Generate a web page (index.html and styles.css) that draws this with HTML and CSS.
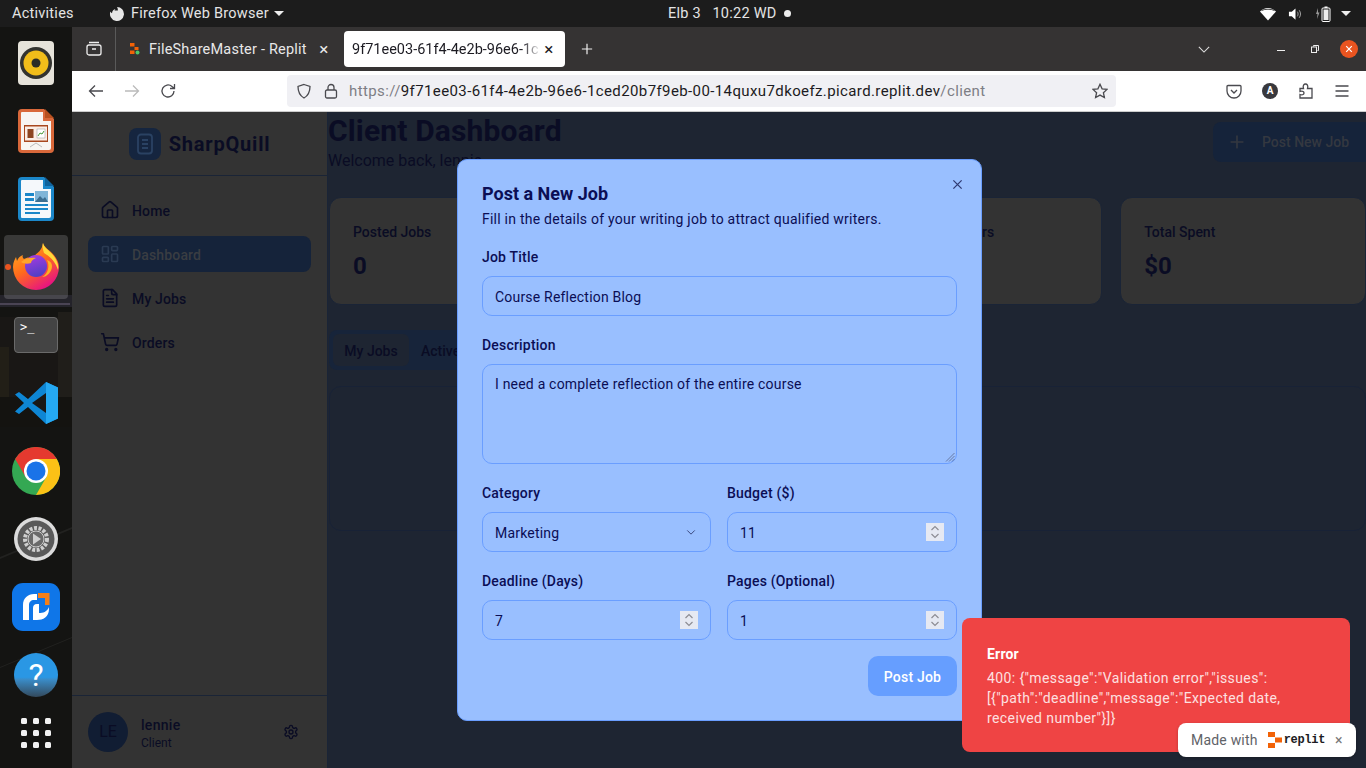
FILE: index.html
```html
<!DOCTYPE html>
<html lang="en">
<head>
    <meta charset="UTF-8">
    <meta name="viewport" content="width=device-width, initial-scale=1.0">
    <title>Client Dashboard</title>
    <link rel="stylesheet" href="styles.css">
</head>
<body>
    <!-- system top bar -->
    <header class="topbar">
        <span class="activities">Activities</span>
        <svg class="top-ff" viewBox="0 0 16 16"><path d="M8 1a7 7 0 1 1-6.6 4.6c.3.9.9 1.5 1.6 1.7C3 5 4.500 3.500 6.500 3 5.800 3.700 5.600 4.300 5.700 4.800c1-.5 3-.6 4 .7.900 1.300.2 3.500-1.700 3.700-1.500.1-2.500-.8-2.700-1.900C6 8 7 8.200 8 7.800 7 7.500 6.500 6.800 6.300 6.200 9 6 9.500 3.500 8 1z" fill="#e6e6e6"/></svg>
        <span class="app-name">Firefox Web Browser</span>
        <span class="caret"></span>
        <span class="clock">Elb 3 &nbsp; 10:22 WD</span>
        <span class="clock-dot"></span>
        <div class="tray">
            <svg class="tray-wifi" viewBox="0 0 16 14"><path d="M0 4.500C2 2.500 5 1 8 1s6 1.500 8 3.500L8 13.500z" fill="#fff"/><path d="M1.500 3.600 C4 1.800 12 1.800 14.500 3.600" stroke="#1c1c1c" stroke-width=".8" fill="none"/></svg>
            <svg class="tray-vol" viewBox="0 0 16 14"><path d="M1 4.500h3L8 1v12L4 9.500H1z" fill="#fff"/><path d="M10 4.500c1 1.500 1 3.500 0 5M12 3c1.800 2.500 1.800 5.500 0 8" stroke="#aaa" fill="none"/></svg>
            <svg class="tray-bat" viewBox="0 0 16 16"><path d="M3 2 1 8h1.500L2 13l2.500-6.500H3z" fill="#999"/><rect x="7" y="2" width="8" height="13.500" rx="1" fill="none" stroke="#fff"/><rect x="9.500" y=".5" width="3" height="1.500" fill="#fff"/><rect x="8.500" y="3.500" width="5" height="10.500" fill="#eee"/></svg>
            <span class="caret"></span>
        </div>
    </header>

    <div class="desktop">
        <nav class="dock">
            <svg class="dock-wall" viewBox="0 0 72 741" preserveAspectRatio="none">
                <rect x="0" y="268" width="72" height="12" fill="#24232a"/>
                <rect x="0" y="276" width="70" height="2" fill="#4a4454"/>
                <rect x="0" y="290" width="72" height="80" fill="#191715"/>
                <rect x="0" y="320" width="9" height="70" fill="#221f17"/>
                <rect x="58" y="285" width="14" height="90" fill="#201e1a"/>
                <rect x="0" y="370" width="72" height="30" fill="#141310"/>
                <path d="M0 530 72 500v2L0 532zM0 640 72 610v1L0 641z" fill="#222220"/>
            </svg>
            <div class="dock-item">
                <svg class="dock-icon" viewBox="0 0 36 44"><rect width="36" height="44" rx="4" fill="#e6e3da"/><circle cx="18" cy="22" r="16" fill="#33332f"/><circle cx="18" cy="22" r="12.500" fill="#f1bd1a"/><circle cx="18" cy="22" r="4.500" fill="#2b2b26"/></svg>
            </div>
            <div class="dock-item">
                <svg class="dock-icon" viewBox="0 0 36 44"><path d="M4 0h22l10 10v30a4 4 0 0 1-4 4H4a4 4 0 0 1-4-4V4a4 4 0 0 1 4-4z" fill="#d9683a"/><path d="M4 3h21v9h8v27a2 2 0 0 1-2 2H4a1 1 0 0 1-1-1V4a1 1 0 0 1 1-1z" fill="#f8f5f2"/><path d="M27 0l9 9h-9z" fill="#b8501f"/><rect x="6" y="16" width="24" height="17" fill="#a8481f"/><rect x="7" y="17.500" width="22" height="14" fill="#fbeee6"/><rect x="9.500" y="20" width="6" height="9" fill="#8c4420"/><rect x="19" y="20" width="8" height="9" fill="#fff" stroke="#999" stroke-width=".5"/><path d="M20 27l2-3 2 1 2-3" stroke="#4a9b3a" fill="none"/><path d="M12 38l6-4 6 4" stroke="#bbb" fill="none"/></svg>
            </div>
            <div class="dock-item">
                <svg class="dock-icon" viewBox="0 0 36 44"><path d="M4 0h22l10 10v30a4 4 0 0 1-4 4H4a4 4 0 0 1-4-4V4a4 4 0 0 1 4-4z" fill="#1b87c9"/><path d="M4 3h21v9h8v27a2 2 0 0 1-2 2H4a1 1 0 0 1-1-1V4a1 1 0 0 1 1-1z" fill="#f5f8fb"/><path d="M27 0l9 9h-9z" fill="#10639b"/><rect x="7" y="16" width="9" height="3" fill="#1b87c9"/><rect x="7" y="21" width="9" height="3" fill="#1b87c9"/><rect x="17" y="14" width="13" height="11" fill="#7fb5d8"/><path d="M17 25l5-6 3 3 2-2 3 5z" fill="#3c6e90"/><rect x="7" y="27" width="23" height="2" fill="#1b87c9"/><rect x="7" y="31" width="23" height="2" fill="#1b87c9"/><rect x="7" y="35" width="15" height="2" fill="#1b87c9"/></svg>
            </div>
            <div class="dock-item dock-item-active">
                <span class="run-dot"></span>
                <svg class="dock-ff" viewBox="0 0 46 48">
                    <defs>
                        <linearGradient id="ffo" x1="0" y1="0" x2=".6" y2="1"><stop offset="0" stop-color="#ffb81f"/><stop offset=".55" stop-color="#ff6a1c"/><stop offset="1" stop-color="#e8157f"/></linearGradient>
                        <linearGradient id="ffp" x1=".3" y1="0" x2=".6" y2="1"><stop offset="0" stop-color="#a53be0"/><stop offset="1" stop-color="#4d3fc4"/></linearGradient>
                    </defs>
                    <path d="M30 1c1 4 5 6 9 10 5 5 7 10 7 14a23 23 0 0 1-46 0c0-5 2-8 3-10l1 4c1-3 3-5 6-6-1 2 0 3 1 4 2-1 5-2 8-1 3-4 10-6 11-15z" fill="url(#ffo)"/>
                    <path d="M30 1c1 5 6 7 10 12 4 5 6 10 5 15-2-7-7-13-14-17-1-3-2-7-1-10z" fill="#ffd93a"/>
                    <circle cx="23" cy="24" r="11" fill="url(#ffp)"/>
                    <path d="M8 20c4-4 10-5 15-4-3 1-5 3-5 5-3 1-7 1-10-1z" fill="#ffa52a"/>
                    <path d="M34 18c3 6 1 14-5 17 5 0 10-5 10-11 0-3-2-5-5-6z" fill="#ffb01f"/>
                </svg>
            </div>
            <div class="dock-item">
                <div class="term-icon"><span>&gt;_</span></div>
            </div>
            <div class="dock-item">
                <svg class="dock-code" viewBox="0 0 44 42"><path d="M32 0 44 5.500v31L32 42 14 25l-9 7-4-2.500L10 21 1 12.500 5 10l9 7z" fill="#0e86d4"/><path d="M32 0l12 5.500v31L32 42z" fill="#25a9f3"/><path d="M32 11 18 21l14 10z" fill="#191817"/></svg>
            </div>
            <div class="dock-item">
                <svg class="dock-round" viewBox="0 0 48 48"><circle cx="24" cy="24" r="24" fill="#34a853"/><path d="M44.800 12A24 24 0 0 1 24 48L34.400 30 24 12z" fill="#fbc116"/><path d="M3.200 12a24 24 0 0 1 41.600 0H24L13.600 30z" fill="#e5392f"/><circle cx="24" cy="24" r="12" fill="#fff"/><circle cx="24" cy="24" r="9.500" fill="#1a73e8"/></svg>
            </div>
            <div class="dock-item">
                <svg class="dock-set" viewBox="0 0 44 44"><circle cx="22" cy="22" r="22" fill="#dcdcdc"/><circle cx="22" cy="22" r="18.500" fill="#5a5a5a"/><circle cx="22" cy="22" r="11" fill="none" stroke="#cfcfcf" stroke-width="4" stroke-dasharray="3 1.500"/><circle cx="22" cy="22" r="8" fill="#6a6a6a" stroke="#cfcfcf"/><path d="M19 16.500v11l8-5.500z" fill="#cfcfcf"/></svg>
            </div>
            <div class="dock-item">
                <svg class="dock-round" viewBox="0 0 48 48"><rect width="48" height="48" rx="11" fill="#0f76e8"/><path d="M11 37V22c0-7 5-11 11-11h3v6h-3c-3 0-5 2-5 5v15z" fill="#fff"/><path d="M21 37V25c0-2 1-4 4-4h2v9c4 0 8-1 10-6v2c0 8-6 11-12 11z" fill="#fff"/><path d="M26 10h11.500v12H33v-7h-7z" fill="#f57f17"/></svg>
            </div>
            <div class="dock-item">
                <div class="help-icon">?</div>
            </div>
            <div class="dock-apps">
                <span></span><span></span><span></span>
                <span></span><span></span><span></span>
                <span></span><span></span><span></span>
            </div>
        </nav>

        <div class="browser">
            <div class="tabstrip">
                <div class="view-btn">
                    <svg class="ic16 light" viewBox="0 0 16 16"><rect x="1" y="4" width="14" height="10" rx="2"/><path d="M3 1.500h10M6 8h4"/></svg>
                </div>
                <div class="tab">
                    <svg class="favicon" viewBox="0 0 10 12"><rect x="0" y="0" width="4.500" height="3.500" fill="#f26207"/><rect x="4.500" y="4" width="4" height="3" fill="#f26207"/><rect x="0" y="7.500" width="4.500" height="3.500" fill="#f26207"/><circle cx="7.500" cy="9.500" r="2" fill="#4cc76b"/></svg>
                    <span class="tab-title">FileShareMaster - Replit</span>
                    <span class="tab-close">×</span>
                </div>
                <div class="tab tab-active">
                    <span class="tab-title">9f71ee03-61f4-4e2b-96e6-1c</span>
                    <span class="tab-close">×</span>
                </div>
                <svg class="new-tab" viewBox="0 0 14 14"><path d="M7 1v12M1 7h12"/></svg>
                <svg class="tab-list" viewBox="0 0 14 8"><path d="M1 1l6 6 6-6"/></svg>
                <div class="win-btns">
                    <span class="win-min"></span>
                    <svg class="win-max" viewBox="0 0 8 8"><path d="M2.500 1.500V.5h5v5h-1"/><rect x=".5" y="2" width="5" height="5.500"/></svg>
                    <span class="win-close">
                        <svg viewBox="0 0 10 10"><path d="M1.500 1.500l7 7M8.500 1.500l-7 7"/></svg>
                    </span>
                </div>
            </div>

            <div class="toolbar">
                <svg class="ic16 tool-back" viewBox="0 0 16 16"><path d="M15 8H1.500M7 2.500 1.500 8 7 13.500"/></svg>
                <svg class="ic16 tool-fwd" viewBox="0 0 16 16"><path d="M1 8h13.500M9 2.500 14.500 8 9 13.500"/></svg>
                <svg class="ic16 tool-reload" viewBox="0 0 16 16"><path d="M14 8a6 6 0 1 1-2-4.500L14 5M14.500 1v4.500H10"/></svg>
                <div class="urlbar">
                    <svg class="ic16" viewBox="0 0 16 16"><path d="M8 1.500 14 3.500c0 5-1.500 9-6 11.500C3.500 12.500 2 8.500 2 3.500z"/></svg>
                    <svg class="ic16 url-lock" viewBox="0 0 16 16"><rect x="2.500" y="7" width="11" height="8" rx="1.500"/><path d="M5 7V4.500a3 3 0 0 1 6 0V7"/></svg>
                    <span class="url-text"><span class="url-dim">https://</span>9f71ee03-61f4-4e2b-96e6-1ced20b7f9eb-00-14quxu7dkoefz.picard.replit.dev<span class="url-dim">/client</span></span>
                    <svg class="ic16 url-star" viewBox="0 0 16 16"><path d="M8 1.300l2.100 4.500 4.900.6-3.600 3.300 1 4.800L8 12.100l-4.400 2.400 1-4.800L1 6.400l4.900-.6z"/></svg>
                </div>
                <div class="tool-right">
                    <svg class="ic16" viewBox="0 0 16 16"><path d="M2 2.500h12a1 1 0 0 1 1 1V8a7 7 0 0 1-14 0V3.500a1 1 0 0 1 1-1zM5 7l3 3 3-3"/></svg>
                    <span class="acct">A</span>
                    <svg class="ic16" viewBox="0 0 16 16"><path d="M2 5.500h3.500c-1-3 .5-4.500 2-4.500s3 1.500 2 4.500H14V15H2v-3.500c3 1 4-.5 4-1.500S5 7.500 2 8.500z"/></svg>
                    <svg class="ic16" viewBox="0 0 16 16"><path d="M1.500 3h13M1.500 8h13M1.500 13h13"/></svg>
                </div>
            </div>

            <div class="app">
                <aside class="sidebar">
                    <div class="brand">
                        <div class="brand-mark">
                            <svg viewBox="0 0 24 24"><rect x="5" y="2.500" width="14" height="19" rx="3"/><path d="M9 8h6M9 12h6M9 16h6"/></svg>
                        </div>
                        <span class="brand-name">SharpQuill</span>
                    </div>
                    <ul class="side-nav">
                        <li class="side-link">
                            <svg class="lu" viewBox="0 0 24 24"><path d="M15 21v-8a1 1 0 0 0-1-1h-4a1 1 0 0 0-1 1v8"/><path d="M3 10a2 2 0 0 1 .709-1.528l7-5.999a2 2 0 0 1 2.582 0l7 5.999A2 2 0 0 1 21 10v9a2 2 0 0 1-2 2H5a2 2 0 0 1-2-2z"/></svg>
                            Home
                        </li>
                        <li class="side-link side-link-on">
                            <svg class="lu" viewBox="0 0 24 24"><rect x="3" y="3" width="7" height="9" rx="1"/><rect x="14" y="3" width="7" height="5" rx="1"/><rect x="14" y="12" width="7" height="9" rx="1"/><rect x="3" y="16" width="7" height="5" rx="1"/></svg>
                            Dashboard
                        </li>
                        <li class="side-link">
                            <svg class="lu" viewBox="0 0 24 24"><path d="M15 2H6a2 2 0 0 0-2 2v16a2 2 0 0 0 2 2h12a2 2 0 0 0 2-2V7Z"/><path d="M14 2v4a2 2 0 0 0 2 2h4"/><path d="M10 9H8"/><path d="M16 13H8"/><path d="M16 17H8"/></svg>
                            My Jobs
                        </li>
                        <li class="side-link">
                            <svg class="lu" viewBox="0 0 24 24"><circle cx="8" cy="21" r="1"/><circle cx="19" cy="21" r="1"/><path d="M2.050 2.050h2l2.660 12.420a2 2 0 0 0 2 1.580h9.780a2 2 0 0 0 1.950-1.570l1.650-7.430H5.120"/></svg>
                            Orders
                        </li>
                    </ul>
                    <div class="side-user">
                        <div class="avatar">LE</div>
                        <div class="user-info">
                            <div class="user-name">lennie</div>
                            <div class="user-role">Client</div>
                        </div>
                        <svg class="lu user-gear" viewBox="0 0 24 24"><path d="M12.220 2h-.44a2 2 0 0 0-2 2v.18a2 2 0 0 1-1 1.730l-.43.25a2 2 0 0 1-2 0l-.15-.08a2 2 0 0 0-2.730.73l-.22.38a2 2 0 0 0 .73 2.730l.15.1a2 2 0 0 1 1 1.720v.51a2 2 0 0 1-1 1.740l-.15.09a2 2 0 0 0-.73 2.730l.22.38a2 2 0 0 0 2.730.73l.15-.08a2 2 0 0 1 2 0l.43.25a2 2 0 0 1 1 1.730V20a2 2 0 0 0 2 2h.44a2 2 0 0 0 2-2v-.18a2 2 0 0 1 1-1.730l.43-.25a2 2 0 0 1 2 0l.15.08a2 2 0 0 0 2.730-.73l.22-.39a2 2 0 0 0-.73-2.730l-.15-.08a2 2 0 0 1-1-1.740v-.5a2 2 0 0 1 1-1.740l.15-.09a2 2 0 0 0 .73-2.730l-.22-.38a2 2 0 0 0-2.730-.73l-.15.08a2 2 0 0 1-2 0l-.43-.25a2 2 0 0 1-1-1.730V4a2 2 0 0 0-2-2z"/><circle cx="12" cy="12" r="3"/></svg>
                    </div>
                </aside>

                <main class="main">
                    <div class="page-head">
                        <div class="page-title">
                            <h1>Client Dashboard</h1>
                            <p class="welcome">Welcome back, lennie</p>
                        </div>
                        <div class="post-btn">
                            <svg class="lu" viewBox="0 0 24 24"><path d="M5 12h14M12 5v14"/></svg>
                            Post New Job
                        </div>
                    </div>
                    <div class="stats">
                        <div class="stat"><div class="stat-label">Posted Jobs</div><div class="stat-value">0</div></div>
                        <div class="stat"></div>
                        <div class="stat"><div class="stat-label">Completed Orders</div></div>
                        <div class="stat"><div class="stat-label">Total Spent</div><div class="stat-value">$0</div></div>
                    </div>
                    <div class="tabs">
                        <span class="tabs-item tabs-item-on">My Jobs</span>
                        <span class="tabs-item">Active</span>
                    </div>
                    <div class="panel"></div>
                </main>
            </div>
        </div>
    </div>

    <!-- dialog and toasts sit over the page -->
    <section class="modal">
        <svg class="modal-x" viewBox="0 0 12 12"><path d="M1.500 1.500l9 9M10.500 1.500l-9 9"/></svg>
        <h2>Post a New Job</h2>
        <p class="modal-sub">Fill in the details of your writing job to attract qualified writers.</p>
        <form class="job-form">
            <div class="field">
                <label>Job Title</label>
                <div class="box">Course Reflection Blog</div>
            </div>
            <div class="field">
                <label>Description</label>
                <div class="box box-area">I need a complete reflection of the entire course
                    <svg class="grip" viewBox="0 0 10 10"><path d="M9.500 1 1 9.500M9.500 4 4 9.500M9.500 7 7 9.500"/></svg>
                </div>
            </div>
            <div class="form-row">
                <div class="field">
                    <label>Category</label>
                    <div class="box box-split">Marketing
                        <svg class="sel-arrow" viewBox="0 0 12 8"><path d="M1.500 1.500 6 6l4.500-4.500"/></svg>
                    </div>
                </div>
                <div class="field">
                    <label>Budget ($)</label>
                    <div class="box box-split">11
                        <span class="spin"><svg viewBox="0 0 18 18"><path d="M5.500 7 9 3.500 12.500 7M5.500 11 9 14.500 12.500 11"/></svg></span>
                    </div>
                </div>
            </div>
            <div class="form-row">
                <div class="field">
                    <label>Deadline (Days)</label>
                    <div class="box box-split">7
                        <span class="spin"><svg viewBox="0 0 18 18"><path d="M5.500 7 9 3.500 12.500 7M5.500 11 9 14.500 12.500 11"/></svg></span>
                    </div>
                </div>
                <div class="field">
                    <label>Pages (Optional)</label>
                    <div class="box box-split">1
                        <span class="spin"><svg viewBox="0 0 18 18"><path d="M5.500 7 9 3.500 12.500 7M5.500 11 9 14.500 12.500 11"/></svg></span>
                    </div>
                </div>
            </div>
            <div class="form-foot">
                <div class="submit">Post Job</div>
            </div>
        </form>
    </section>

    <div class="toast">
        <div class="toast-title">Error</div>
        <div class="toast-body">400: {"message":"Validation error","issues":<br>[{"path":"deadline","message":"Expected date,<br>received number"}]}</div>
    </div>

    <div class="made-with">
        <span>Made with</span>
        <svg class="replit-mark" viewBox="0 0 14 16"><rect x="0" y="0" width="7" height="5" fill="#f26207"/><rect x="7" y="5.500" width="7" height="5" fill="#f26207"/><rect x="0" y="11" width="7" height="5" fill="#f26207"/></svg>
        <b>replit</b>
        <i>×</i>
    </div>
</body>
</html>
```

FILE: styles.css
```css
* {
    box-sizing: border-box;
}
html, body {
    height: 100%;
}
body {
    margin: 0;
    width: 1366px;
    height: 768px;
    overflow: hidden;
    font-family: Roboto, "Noto Sans", sans-serif;
    font-size: 14px;
    background: #1e2532;
    display: flex;
    flex-direction: column;
}

/* top bar */
.topbar {
    height: 27px;
    flex: none;
    background: #1c1c1c;
    color: #e4e4e4;
    display: flex;
    align-items: center;
    font-size: 14.5px;
    letter-spacing: 0.25px;
    padding-left: 12px;
}
.activities {
    width: 97px;
}
.top-ff {
    width: 16px;
    height: 16px;
    margin-right: 6px;
}
.app-name {
    width: 143px;
}
.caret {
    width: 0;
    height: 0;
    border-left: 5px solid transparent;
    border-right: 5px solid transparent;
    border-top: 5px solid #eee;
}
.clock {
    margin-left: 384px;
    width: 116px;
}
.clock-dot {
    width: 7px;
    height: 7px;
    border-radius: 50%;
    background: #eee;
}
.tray {
    margin-left: auto;
    display: flex;
    align-items: center;
    padding-right: 15px;
}
.tray-wifi {
    width: 16px;
    height: 14px;
    margin-right: 12px;
}
.tray-vol {
    width: 15px;
    height: 14px;
    margin-right: 12px;
}
.tray-bat {
    width: 16px;
    height: 16px;
    margin-right: 10px;
}

.desktop {
    flex: 1;
    display: flex;
    min-height: 0;
}

/* dock */
.dock {
    width: 72px;
    flex: none;
    background: #141412;
    position: relative;
    padding-top: 2px;
    display: flex;
    flex-direction: column;
    align-items: center;
}
.dock-wall {
    position: absolute;
    left: 0;
    top: 0;
    width: 100%;
    height: 100%;
}
.dock-item {
    height: 68px;
    width: 64px;
    flex: none;
    display: flex;
    align-items: center;
    justify-content: center;
    position: relative;
}
.dock-item-active {
    background: rgba(255, 255, 255, 0.16);
    border-radius: 4px;
    height: 64px;
    margin: 2px 0;
    padding-bottom: 3px;
}
.dock-icon {
    width: 36px;
    height: 44px;
}
.dock-ff {
    width: 46px;
    height: 48px;
}
.run-dot {
    position: absolute;
    left: 1px;
    top: 29px;
    width: 6px;
    height: 6px;
    border-radius: 50%;
    background: #e95420;
}
.term-icon {
    width: 44px;
    height: 36px;
    background: #444;
    border: 1px solid #6a6a6a;
    border-radius: 4px;
    color: #fff;
    font-family: "DejaVu Sans Mono", monospace;
    font-size: 12px;
    line-height: 14px;
    padding: 2px 5px;
}
.dock-code {
    width: 44px;
    height: 42px;
}
.dock-round {
    width: 48px;
    height: 48px;
}
.dock-set {
    width: 44px;
    height: 44px;
}
.help-icon {
    width: 44px;
    height: 44px;
    border-radius: 50%;
    background: linear-gradient(#2a97e4 55%, #3a8cc8 60%, #33495c);
    color: #fff;
    font-size: 32px;
    line-height: 44px;
    text-align: center;
}
.dock-apps {
    position: relative;
    margin-top: 9px;
    width: 30px;
    display: grid;
    grid-template-columns: repeat(3, 6px);
    grid-auto-rows: 6px;
    gap: 6px;
}
.dock-apps span {
    background: #f2f2f2;
    border-radius: 1.5px;
}

/* browser chrome */
.browser {
    flex: 1;
    min-width: 0;
    display: flex;
    flex-direction: column;
}
.ic16 {
    width: 16px;
    height: 16px;
    fill: none;
    stroke: #4a4a4f;
    stroke-width: 1.3;
    flex: none;
}
.ic16.light {
    stroke: #eee;
}
.tabstrip {
    height: 44px;
    flex: none;
    background: #353333;
    display: flex;
    align-items: center;
}
.view-btn {
    width: 44px;
    height: 44px;
    border-right: 1px solid #5a5a5a;
    display: flex;
    align-items: center;
    justify-content: center;
    flex: none;
}
.tab {
    height: 36px;
    display: flex;
    align-items: center;
    color: #e8e8e8;
    font-size: 14.5px;
    letter-spacing: 0.2px;
    flex: none;
}
.tab:nth-child(2) {
    width: 228px;
    padding: 0 12px 0 14px;
}
.favicon {
    width: 10px;
    height: 12px;
    margin-right: 9px;
    flex: none;
}
.tab-title {
    flex: 1;
    white-space: nowrap;
}
.tab-close {
    font-size: 17px;
    line-height: 17px;
    width: 16px;
    text-align: center;
    flex: none;
}
.tab-active {
    width: 221px;
    background: #fff;
    border-radius: 4px;
    color: #1c1b22;
    padding: 0 8px;
}
.tab-active .tab-title {
    letter-spacing: 0;
    -webkit-mask-image: linear-gradient(90deg, #000 90%, transparent);
    mask-image: linear-gradient(90deg, #000 90%, transparent);
}
.new-tab {
    width: 12px;
    height: 12px;
    margin-left: 16px;
    fill: none;
    stroke: #eee;
    stroke-width: 1.4;
}
.tab-list {
    width: 12px;
    height: 7px;
    margin-left: 605px;
    fill: none;
    stroke: #ddd;
    stroke-width: 1.3;
}
.win-btns {
    margin-left: auto;
    display: flex;
    align-items: center;
}
.win-min {
    width: 8px;
    height: 1.5px;
    background: #eee;
    margin-top: 3px;
    margin-right: 26px;
}
.win-max {
    width: 8px;
    height: 8px;
    fill: none;
    stroke: #eee;
    margin-right: 21px;
}
.win-close {
    width: 18px;
    height: 18px;
    margin-right: 8px;
    border-radius: 50%;
    background: #e95420;
    display: flex;
    align-items: center;
    justify-content: center;
}
.win-close svg {
    width: 8px;
    height: 8px;
    stroke: #fff;
    stroke-width: 1.5;
}

.toolbar {
    height: 41px;
    flex: none;
    background: #fff;
    border-bottom: 1px solid #ccc;
    display: flex;
    align-items: center;
    padding-left: 16px;
    padding-bottom: 1px;
}
.tool-back, .tool-fwd {
    margin-right: 20px;
}
.tool-fwd {
    stroke: #bbb;
}
.tool-reload {
    margin-right: 111px;
}
.urlbar {
    width: 829px;
    height: 32px;
    background: #f0f0f4;
    border-radius: 4px;
    display: flex;
    align-items: center;
    padding: 0 8px 0 9px;
}
.url-lock {
    margin-left: 11px;
}
.url-text {
    margin-left: 10px;
    font-size: 15px;
    letter-spacing: 0.39px;
    color: #1c1b22;
    white-space: nowrap;
}
.url-dim {
    color: #7e7e85;
}
.url-star {
    margin-left: auto;
}
.tool-right {
    margin-left: 110px;
    display: flex;
    align-items: center;
    gap: 20px;
}
.acct {
    width: 16px;
    height: 16px;
    border-radius: 50%;
    background: #38383d;
    color: #fff;
    font-size: 10px;
    font-weight: 700;
    line-height: 16px;
    text-align: center;
}

/* dimmed app underneath */
.app {
    flex: 1;
    min-height: 0;
    display: flex;
}
.lu {
    width: 20px;
    height: 20px;
    fill: none;
    stroke: currentColor;
    stroke-width: 2;
    stroke-linecap: round;
    stroke-linejoin: round;
    flex: none;
}
.sidebar {
    width: 256px;
    flex: none;
    background: #333;
    border-right: 1px solid #1a2436;
    display: flex;
    flex-direction: column;
    color: #0a0c24;
}
.brand {
    height: 64px;
    flex: none;
    border-bottom: 1px solid #1a2436;
    display: flex;
    align-items: center;
    justify-content: center;
    gap: 8px;
}
.brand-mark {
    width: 32px;
    height: 32px;
    background: #15253f;
    border-radius: 8px;
    display: flex;
    align-items: center;
    justify-content: center;
}
.brand-mark svg {
    width: 24px;
    height: 24px;
    fill: none;
    stroke: #2a4263;
    stroke-width: 1.8;
}
.brand-name {
    font-size: 20px;
    font-weight: 700;
    letter-spacing: 0.8px;
}
.side-nav {
    list-style: none;
    margin: 0;
    padding: 16px;
    flex: 1;
}
.side-link {
    height: 36px;
    margin-bottom: 8px;
    padding: 2px 12px 0;
    display: flex;
    align-items: center;
    gap: 12px;
    font-weight: 500;
    letter-spacing: 0.15px;
    border-radius: 8px;
}
.side-link .lu {
    margin-top: -3px;
}
.side-link-on {
    background: #15233a;
    color: #3a3d42;
}
.side-link-on .lu {
    color: #2a3a52;
}
.side-user {
    height: 73px;
    flex: none;
    border-top: 1px solid #1a2436;
    display: flex;
    align-items: center;
    padding: 0 16px;
}
.avatar {
    width: 40px;
    height: 40px;
    border-radius: 50%;
    background: #111d33;
    font-size: 16px;
    line-height: 40px;
    text-align: center;
    margin-right: 13px;
}
.user-info {
    padding-top: 4px;
}
.user-name {
    font-weight: 500;
    line-height: 18px;
    letter-spacing: 0.3px;
}
.user-role {
    margin-top: 1px;
    font-size: 12px;
    line-height: 17px;
}
.user-gear {
    width: 16px;
    height: 16px;
    margin-left: auto;
    margin-right: 12px;
}
.main {
    flex: 1;
    min-width: 0;
    color: #0a0c24;
}
.page-head {
    height: 85px;
    display: flex;
    justify-content: space-between;
    align-items: flex-start;
}
.page-title {
    padding-top: 1px;
}
h1 {
    margin: 0;
    font-size: 30px;
    line-height: 36px;
    font-weight: 700;
    letter-spacing: 0.15px;
}
.welcome {
    margin: 0;
    font-size: 16px;
    line-height: 24px;
}
.post-btn {
    margin-top: 10px;
    width: 153px;
    height: 40px;
    background: #15233a;
    border-radius: 8px 0 0 8px;
    color: #343840;
    font-weight: 500;
    display: flex;
    align-items: center;
    gap: 15px;
    padding-left: 14px;
}
.stats {
    margin-left: 1px;
    display: grid;
    grid-template-columns: repeat(4, 1fr);
    gap: 18px;
}
.stat {
    height: 108px;
    background: #333;
    border: 1px solid #1a2436;
    border-radius: 12px;
    padding: 24px 23px;
}
.stat-label {
    font-weight: 500;
    line-height: 20px;
}
.stat-value {
    margin-top: 8px;
    font-size: 24px;
    font-weight: 700;
    line-height: 32px;
}
.tabs {
    margin: 25px 0 0 1px;
    width: 200px;
    height: 40px;
    background: #17243a;
    border-radius: 8px;
    padding: 4px;
    display: flex;
    font-weight: 500;
}
.tabs-item {
    height: 32px;
    line-height: 34px;
    border-radius: 6px;
}
.tabs-item-on {
    width: 76px;
    background: #1e2532;
    margin-right: 12px;
    text-align: center;
}
.panel {
    margin: 16px 0 0 1px;
    height: 145px;
    border: 1px solid #182236;
    border-radius: 12px;
}

/* dialog */
.modal {
    position: absolute;
    left: 457px;
    top: 159px;
    width: 525px;
    height: 562px;
    background: #99bfff;
    border: 1px solid #6a9eff;
    border-radius: 10px;
    padding: 24px;
    color: #0b0e55;
    letter-spacing: 0.2px;
}
.modal-x {
    position: absolute;
    left: 494px;
    top: 19px;
    width: 11px;
    height: 11px;
    fill: none;
    stroke: #2f3a72;
    stroke-width: 1.4;
}
h2 {
    margin: 0;
    font-size: 18px;
    line-height: 20px;
    font-weight: 700;
    letter-spacing: 0;
}
.modal-sub {
    margin: 5px 0 0;
    line-height: 20px;
    letter-spacing: 0.24px;
}
.job-form {
    margin-top: 18px;
    display: flex;
    flex-direction: column;
    gap: 19px;
}
.field {
    display: flex;
    flex-direction: column;
    gap: 9px;
    min-width: 0;
}
label {
    font-weight: 500;
    line-height: 20px;
}
.box {
    height: 40px;
    border: 1px solid #6a9eff;
    border-radius: 10px;
    padding: 0 12px;
    line-height: 41px;
    position: relative;
}
.box-area {
    height: 100px;
    line-height: 38px;
}
.box-split {
    display: flex;
    align-items: center;
    justify-content: space-between;
    padding-top: 2px;
}
.grip {
    position: absolute;
    right: 1px;
    bottom: 1px;
    width: 10px;
    height: 10px;
    stroke: #5b6a8f;
    stroke-width: 0.8;
    fill: none;
}
.sel-arrow {
    width: 10px;
    height: 7px;
    margin-top: -2px;
    margin-right: 2px;
    stroke: #3c4a80;
    stroke-width: 1.2;
    fill: none;
}
.spin {
    width: 18px;
    height: 18px;
    margin-top: -2px;
    background: #e6e9f2;
    display: block;
}
.spin svg {
    display: block;
    width: 18px;
    height: 18px;
    stroke: #8d8d94;
    stroke-width: 1.2;
    fill: none;
}
.form-row {
    display: grid;
    grid-template-columns: 229px 230px;
    gap: 16px;
}
.form-foot {
    display: flex;
    justify-content: flex-end;
    margin-top: -3px;
}
.submit {
    width: 89px;
    height: 40px;
    background: #669eff;
    border-radius: 10px;
    color: #fff;
    font-weight: 500;
    line-height: 43px;
    text-align: center;
}

/* toast + badge */
.toast {
    position: absolute;
    left: 962px;
    top: 618px;
    width: 388px;
    height: 134px;
    background: #ef4444;
    border-radius: 8px;
    padding: 26px 25px;
    color: #fff;
}
.toast-title {
    font-weight: 700;
    line-height: 20px;
    letter-spacing: 0.2px;
}
.toast-body {
    margin-top: 4px;
    line-height: 20px;
    color: #fde0e0;
    letter-spacing: 0.4px;
    white-space: nowrap;
}
.made-with {
    position: absolute;
    left: 1178px;
    top: 723px;
    width: 178px;
    height: 34px;
    background: #fff;
    border-radius: 8px;
    display: flex;
    align-items: center;
    padding-left: 13px;
    color: #5f6368;
    letter-spacing: 0.2px;
    box-shadow: 0 1px 3px rgba(0, 0, 0, 0.25);
}
.replit-mark {
    width: 14px;
    height: 16px;
    margin-left: 10px;
    margin-right: 2px;
}
.made-with b {
    font-family: "Liberation Mono", monospace;
    font-size: 12px;
    letter-spacing: -0.3px;
    color: #1c1b22;
}
.made-with i {
    font-style: normal;
    margin-left: 10px;
    font-size: 14px;
    color: #777;
}
```
